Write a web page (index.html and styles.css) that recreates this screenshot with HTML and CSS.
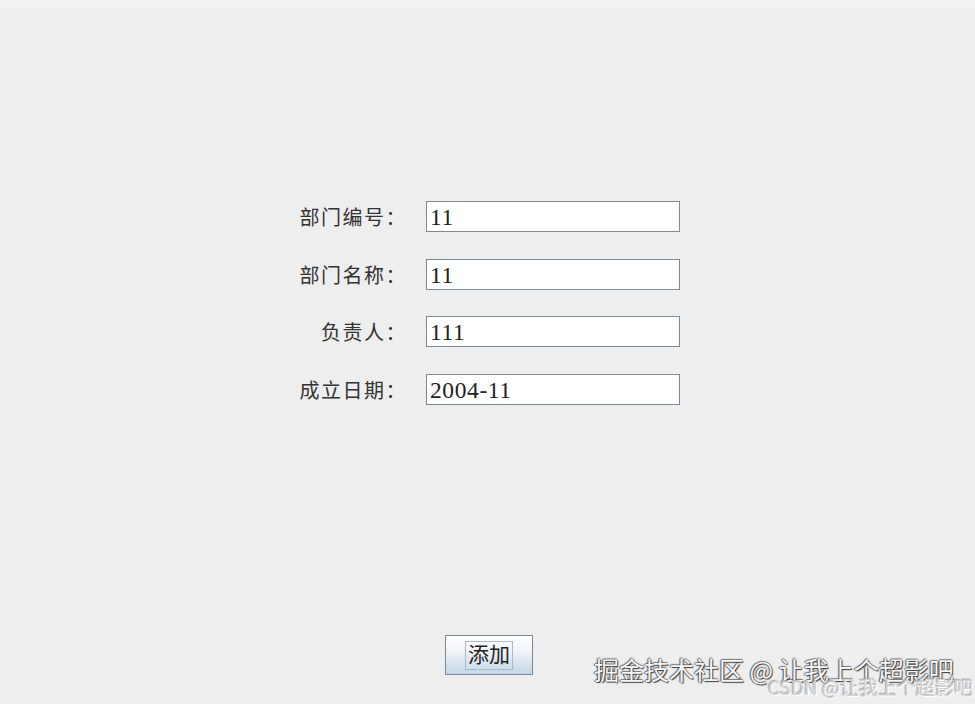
FILE: index.html
```html
<!DOCTYPE html>
<html lang="zh">
<head>
<meta charset="utf-8">
<title>添加部门</title>
<link rel="stylesheet" href="styles.css">
</head>
<body>
<div class="window">
  <div class="topstrip"></div>
  <div class="form">
    <label class="label">部门编号：</label>
    <div class="field">11</div>
    <label class="label">部门名称：</label>
    <div class="field">11</div>
    <label class="label">负责人：</label>
    <div class="field">111</div>
    <label class="label">成立日期：</label>
    <div class="field">2004-11</div>
  </div>
  <div class="actions">
    <button class="btn"><span class="btn-focus">添加</span></button>
  </div>
  <div class="watermark">
    <div class="wm-main">掘金技术社区 @ 让我上个超影吧</div>
    <div class="wm-sub">CSDN @让我上个超影吧</div>
  </div>
</div>
</body>
</html>
```

FILE: styles.css
```css
html, body {
  margin: 0;
  padding: 0;
  background: #eeeeee;
}
.window {
  position: relative;
  width: 975px;
  height: 704px;
  overflow: hidden;
  background: #eeeeee;
  display: flex;
  flex-direction: column;
}
.topstrip {
  height: 8px;
  background: linear-gradient(#f3f4f6, #f1f1f2);
}
.form {
  margin-top: 193px;
  margin-left: 280px;
  display: grid;
  grid-template-columns: 127px 254px;
  column-gap: 19px;
  row-gap: 26.7px;
  align-items: center;
}
.label {
  text-align: right;
  font-family: "Noto Sans CJK SC", sans-serif;
  font-size: 20px;
  letter-spacing: 1.5px;
  color: #333333;
  line-height: 31px;
  height: 31px;
}
.field {
  box-sizing: border-box;
  height: 31px;
  background: #ffffff;
  border: 1px solid #7a8a99;
  padding: 0 0 0 3px;
  font-family: "Liberation Serif", serif;
  font-size: 23.5px;
  letter-spacing: 0.6px;
  line-height: 30px;
  color: #222222;
}
.actions {
  margin-top: 230px;
  margin-left: 445px;
  display: flex;
}
.btn {
  box-sizing: border-box;
  width: 88px;
  height: 40px;
  border: 1px solid #7a8a99;
  border-radius: 0;
  background: linear-gradient(#ffffff 0%, #eef2f7 45%, #dfe8f1 60%, #c6d7e7 100%);
  padding: 0;
  display: flex;
  align-items: center;
  justify-content: center;
  cursor: pointer;
}
.btn-focus {
  box-sizing: border-box;
  width: 48px;
  height: 29px;
  border: 1px solid #a8bacb;
  font-family: "Noto Sans CJK SC", sans-serif;
  font-size: 21px;
  line-height: 23px;
  color: #222222;
}
.watermark {
  position: absolute;
  left: 594px;
  top: 651px;
}
.wm-main {
  font-family: "Noto Sans CJK SC", sans-serif;
  font-size: 25px;
  line-height: 36px;
  color: #f6f6f6;
  white-space: nowrap;
  text-shadow: 1px 1px 1px #3a3a3a, -1px 0 1px #555555, 0 -1px 1px #777777;
}
.wm-sub {
  position: absolute;
  left: 174px;
  top: 25px;
  font-family: "Noto Sans CJK SC", sans-serif;
  font-size: 19px;
  line-height: 22px;
  color: #d2d2d2;
  white-space: nowrap;
  text-shadow: 1px 1px 0 #ffffff, -1px -1px 1px #a8a8a8;
}
```
